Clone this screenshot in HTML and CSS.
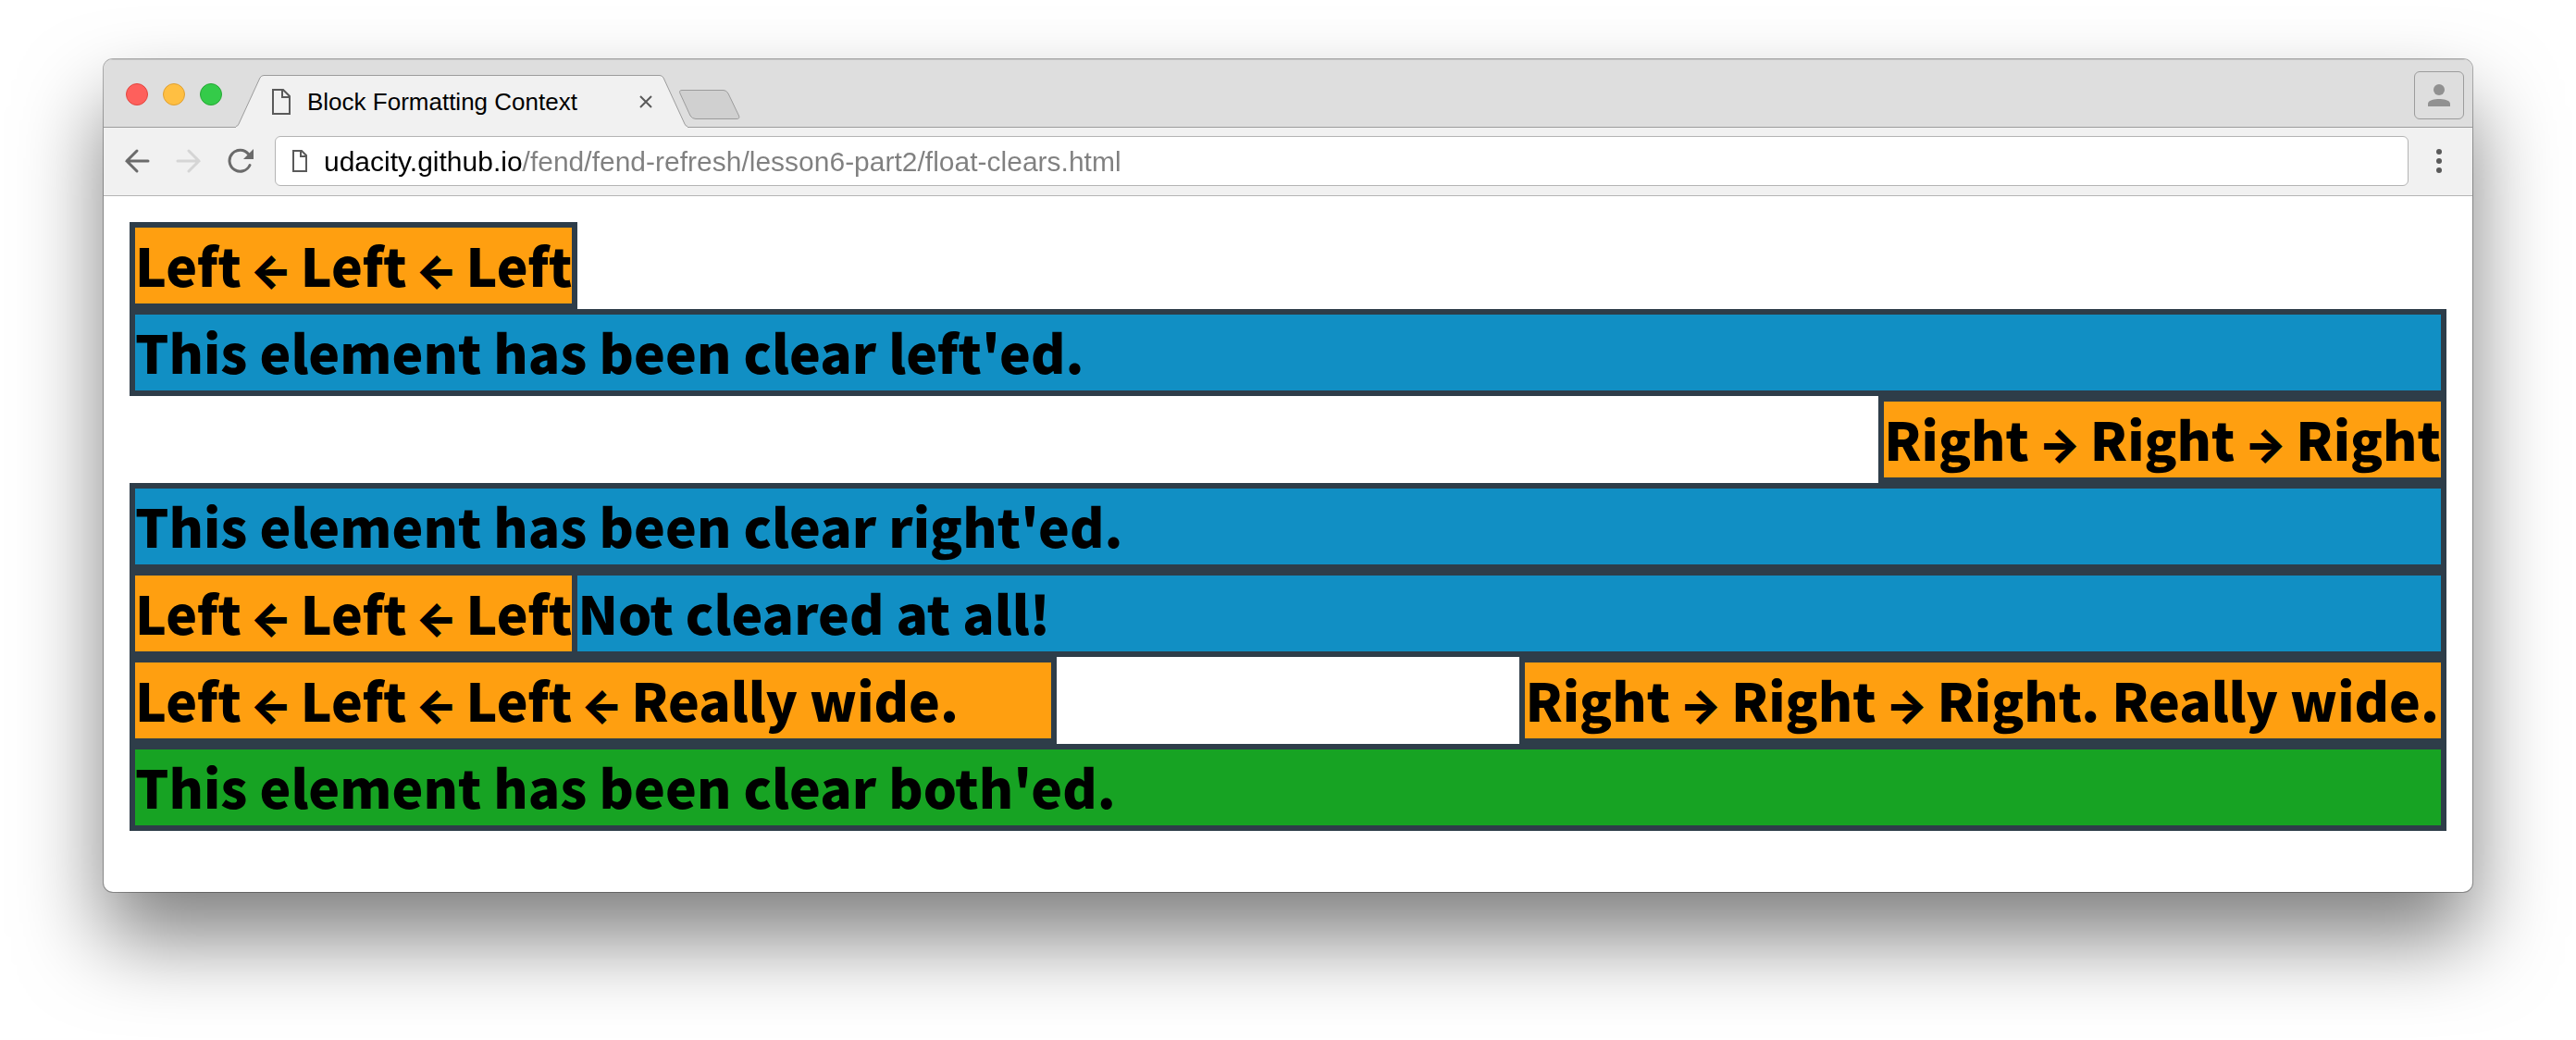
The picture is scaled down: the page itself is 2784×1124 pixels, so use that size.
FILE: index.html
```
<!DOCTYPE html>
<html lang="en">
<head>
<meta charset="utf-8">
<title>Block Formatting Context</title>
<link rel="stylesheet" href="styles.css">
</head>
<body>
<div class="window">
  <header class="tab-strip">
    <div class="lights">
      <button class="light light-close" type="button" aria-label="Close window"></button>
      <button class="light light-minimize" type="button" aria-label="Minimize window"></button>
      <button class="light light-zoom" type="button" aria-label="Zoom window"></button>
    </div>
    <div class="tab">
      <svg class="tab-edge" width="30" height="57" viewBox="0 0 30 57" aria-hidden="true">
        <path d="M0 57V55.5Q2 55.5 3 53L26 3Q27.500 .5 30 .5V57Z" fill="#f1f1f1"/>
        <path d="M0 55.500Q2 55.500 3 53L26 3Q27.500 .5 30 .5" fill="none" stroke="#9c9c9c"/>
      </svg>
      <div class="tab-body">
        <svg class="tab-file" width="20" height="28" viewBox="0 0 20 28" aria-hidden="true">
          <path d="M1 1H12L19 8V27H1ZM11 1V9H19" fill="none" stroke="#5a5a5a" stroke-width="2"/>
        </svg>
        <span class="tab-title">Block Formatting Context</span>
        <button class="tab-close" type="button" aria-label="Close tab">
          <svg width="14" height="14" viewBox="0 0 14 14" aria-hidden="true"><path d="M1 1L13 13M13 1L1 13" stroke="#5a5a5a" stroke-width="2"/></svg>
        </button>
      </div>
      <svg class="tab-edge" width="30" height="57" viewBox="0 0 30 57" aria-hidden="true">
        <path d="M30 57V55.500Q28 55.500 27 53L4 3Q2.500 .5 0 .5V57Z" fill="#f1f1f1"/>
        <path d="M30 55.500Q28 55.500 27 53L4 3Q2.500 .5 0 .5" fill="none" stroke="#9c9c9c"/>
      </svg>
    </div>
    <button class="new-tab" type="button" aria-label="New tab">
      <svg width="66" height="32" viewBox="0 0 66 32" aria-hidden="true"><path d="M3 .5H48Q51 .5 53 4L64.500 28Q66 31.500 62 31.500H18Q14 31.500 12 28L1 4Q-.5 .5 3 .5Z" fill="#d0d0d0" stroke="#9c9c9c"/></svg>
    </button>
    <button class="profile" type="button" aria-label="Profile">
      <svg width="24" height="24" viewBox="0 0 24 24" aria-hidden="true"><circle cx="12" cy="6" r="6" fill="#919191"/><path d="M0 24V21C0 17 8 16 12 16S24 17 24 21V24Z" fill="#919191"/></svg>
    </button>
  </header>
  <div class="toolbar">
    <button class="tool" type="button" aria-label="Back">
      <svg width="28" height="28" viewBox="0 0 28 28" aria-hidden="true"><path d="M14 3L3 14L14 25M3 14H26" fill="none" stroke="#6b6b6b" stroke-width="3" stroke-linecap="round"/></svg>
    </button>
    <button class="tool" type="button" aria-label="Forward" disabled>
      <svg width="28" height="28" viewBox="0 0 28 28" aria-hidden="true"><path d="M14 3L25 14L14 25M25 14H2" fill="none" stroke="#d5d5d5" stroke-width="3" stroke-linecap="round"/></svg>
    </button>
    <button class="tool" type="button" aria-label="Reload">
      <svg width="28" height="28" viewBox="0 0 28 28" aria-hidden="true"><path d="M24 18.500A11.500 11.500 0 1 1 22.500 6.500" fill="none" stroke="#6b6b6b" stroke-width="3" stroke-linecap="round"/><path d="M28 1V12H17Z" fill="#6b6b6b"/></svg>
    </button>
    <label class="omnibox">
      <svg width="16" height="24" viewBox="0 0 16 24" aria-hidden="true"><path d="M1 1H10L15 6V23H1ZM9 1V7H15" fill="none" stroke="#5a5a5a" stroke-width="2"/></svg>
      <input class="address" type="text" aria-label="Address" value="udacity.github.io/fend/fend-refresh/lesson6-part2/float-clears.html" spellcheck="false">
    </label>
    <button class="menu" type="button" aria-label="Menu">
      <svg width="6" height="26" viewBox="0 0 6 26" aria-hidden="true"><g fill="#5a5a5a"><circle cx="3" cy="3" r="3"/><circle cx="3" cy="13" r="3"/><circle cx="3" cy="23" r="3"/></g></svg>
    </button>
  </div>
  <main class="page">
    <div class="box left">Left <span class="arrow arrow-left">←</span> Left <span class="arrow arrow-left">←</span> Left</div>
    <div class="box clear-left">This element has been clear left'ed.</div>
    <div class="box right">Right <span class="arrow">→</span> Right <span class="arrow">→</span> Right</div>
    <div class="box clear-right">This element has been clear right'ed.</div>
    <div class="box left">Left <span class="arrow arrow-left">←</span> Left <span class="arrow arrow-left">←</span> Left</div>
    <div class="box">Not cleared at all!</div>
    <div class="box left wide">Left <span class="arrow arrow-left">←</span> Left <span class="arrow arrow-left">←</span> Left <span class="arrow arrow-left">←</span> Really wide.</div>
    <div class="box right wide">Right <span class="arrow">→</span> Right <span class="arrow">→</span> Right. Really wide.</div>
    <div class="box clear-both">This element has been clear both'ed.</div>
  </main>
</div>
</body>
</html>
```
FILE: styles.css
```
* {
  box-sizing: border-box;
}

body {
  margin: 0;
  padding: 64px 112px 160px;
  background: #fff;
  color: #000;
  font-family: "Liberation Sans", Arial, sans-serif;
}

button {
  display: flex;
  align-items: center;
  justify-content: center;
  margin: 0;
  padding: 0;
  border: 0;
  background: none;
}

svg {
  display: block;
  flex: none;
}

.window {
  overflow: hidden;
  border-radius: 10px;
  background: #fff;
  box-shadow: 0 0 0 1px rgba(0, 0, 0, .3), 0 50px 90px rgba(0, 0, 0, .5);
}

/* Tab strip */
.tab-strip {
  display: flex;
  align-items: flex-end;
  height: 74px;
  padding: 0 9px 0 24px;
  border-top: 1px solid #c4c4c4;
  background: #dedede;
  box-shadow: inset 0 -1px #9c9c9c;
}

.lights {
  display: flex;
  gap: 16px;
  width: 119px;
  padding-bottom: 24px;
}

.light {
  width: 24px;
  height: 24px;
  border: 1px solid;
  border-radius: 50%;
}

.light-close {
  border-color: #e2463f;
  background: #fe605c;
}

.light-minimize {
  border-color: #dfa032;
  background: #ffbf42;
}

.light-zoom {
  border-color: #27a835;
  background: #34cb49;
}

.tab {
  display: flex;
}

.tab-body {
  display: flex;
  align-items: center;
  width: 428px;
  height: 57px;
  padding: 0 8px 0 9px;
  border-top: 1px solid #9c9c9c;
  background: #f1f1f1;
}

.tab-title {
  flex: 1;
  margin-left: 18px;
  font-size: 26px;
  line-height: 32px;
  white-space: nowrap;
}

.new-tab {
  margin: 0 auto 9px -9px;
}

.profile {
  width: 54px;
  height: 52px;
  margin-bottom: 9px;
  border: 1px solid #9c9c9c;
  border-radius: 6px;
}

/* Toolbar */
.toolbar {
  display: flex;
  align-items: center;
  height: 74px;
  padding: 0 33px 2px 22px;
  border-bottom: 1px solid #b4b4b4;
  background: #f1f1f1;
}

.tool {
  width: 28px;
  height: 28px;
  margin-right: 28px;
}

.omnibox {
  display: flex;
  flex: 1;
  align-items: center;
  gap: 18px;
  height: 54px;
  margin: 0 30px 0 -5px;
  padding: 0 18px;
  border: 1px solid #b4b4b4;
  border-radius: 6px;
  background: #fff;
}

.address {
  flex: 1;
  min-width: 0;
  padding: 2px 0 0;
  border: 0;
  outline: 0;
  background: linear-gradient(to right, #000 215px, #808080 215px);
  -webkit-background-clip: text;
  background-clip: text;
  color: #808080;
  -webkit-text-fill-color: transparent;
  font: 30px/36px "Liberation Sans", Arial, sans-serif;
}

/* Page content */
.page {
  padding: 28px 28px 66px;
  font: 900 57px/78px "Noto Sans CJK SC", "Noto Sans", sans-serif;
}

.box {
  padding-bottom: 4px;
  border: 6px solid #2e3d49;
  background: #118fc4;
}

.left {
  float: left;
  background: #ff9f10;
}

.right {
  float: right;
  background: #ff9f10;
}

.wide {
  width: 40%;
  white-space: nowrap;
}

.clear-left {
  clear: left;
}

.clear-right {
  clear: right;
}

.clear-both {
  clear: both;
  background: #17a323;
}

.arrow {
  margin: 0 -3px;
  font-family: Inter, sans-serif;
  font-size: 48px;
  line-height: 1;
}

.arrow-left {
  margin: 0 -4px;
}
```
